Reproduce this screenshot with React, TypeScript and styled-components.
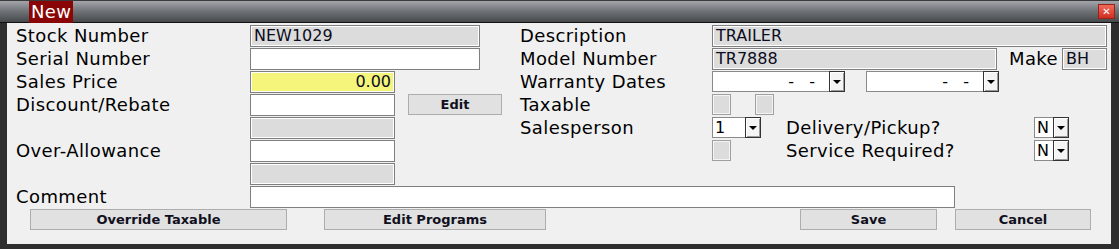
import React from "react";
import styled, { createGlobalStyle } from "styled-components";

const GlobalStyle = createGlobalStyle`
  html, body {
    margin: 0;
    padding: 0;
    background: #2e2e2e;
  }
  * {
    box-sizing: border-box;
  }
`;

export default function App() {
  return (
    <>
      <GlobalStyle />
      <Window>
        <TitleBar>
          <TitleBadge>New</TitleBadge>
          <CloseButton>✕</CloseButton>
        </TitleBar>
        <Panel>
          <Form>
            {/* row 1 */}
            <Label row={1}>Stock Number</Label>
            <Cell row={1} col={2}>
              <Field w={230} tone="gray">NEW1029</Field>
            </Cell>
            <Label row={1} col={3}>Description</Label>
            <Cell row={1} col={4}>
              <Field w={395} tone="gray">TRAILER</Field>
            </Cell>

            {/* row 2 */}
            <Label row={2}>Serial Number</Label>
            <Cell row={2} col={2}>
              <Field w={230} tone="white" />
            </Cell>
            <Label row={2} col={3}>Model Number</Label>
            <Cell row={2} col={4}>
              <Field w={285} tone="gray">TR7888</Field>
              <InlineLabel gap={12}>Make</InlineLabel>
              <Field w={45} tone="gray" gap={4}>BH</Field>
            </Cell>

            {/* row 3 */}
            <Label row={3}>Sales Price</Label>
            <Cell row={3} col={2}>
              <Field w={145} tone="yellow" right>
                0.00
              </Field>
            </Cell>
            <Label row={3} col={3}>Warranty Dates</Label>
            <Cell row={3} col={4}>
              <Dropdown w={117} date>
                {"-   -"}
              </Dropdown>
              <Dropdown w={117} date gap={21}>
                {"-   -"}
              </Dropdown>
            </Cell>

            {/* row 4 */}
            <Label row={4}>Discount/Rebate</Label>
            <Cell row={4} col={2}>
              <Field w={145} tone="white" />
              <Button w={94} gap={13}>
                Edit
              </Button>
            </Cell>
            <Label row={4} col={3}>Taxable</Label>
            <Cell row={4} col={4}>
              <CheckBox />
              <CheckBox gap={24} />
            </Cell>

            {/* row 5 */}
            <Cell row={5} col={2}>
              <Field w={145} tone="gray" />
            </Cell>
            <Label row={5} col={3}>Salesperson</Label>
            <Cell row={5} col={4}>
              <Slot>
                <Dropdown w={33}>1</Dropdown>
              </Slot>
              <InlineLabel w={248}>Delivery/Pickup?</InlineLabel>
              <Dropdown w={19}>N</Dropdown>
            </Cell>

            {/* row 6 */}
            <Label row={6}>Over-Allowance</Label>
            <Cell row={6} col={2}>
              <Field w={145} tone="white" />
            </Cell>
            <Cell row={6} col={4}>
              <Slot>
                <CheckBox />
              </Slot>
              <InlineLabel w={248}>Service Required?</InlineLabel>
              <Dropdown w={19}>N</Dropdown>
            </Cell>

            {/* row 7 */}
            <Cell row={7} col={2}>
              <Field w={145} tone="gray" />
            </Cell>

            {/* row 8 */}
            <Label row={8}>Comment</Label>
            <Cell row={8} col={2} span={3}>
              <Field w={705} tone="white" />
            </Cell>
          </Form>

          <ButtonRow>
            <Button w={257}>Override Taxable</Button>
            <Button w={222} gap={37}>
              Edit Programs
            </Button>
            <Button w={137} gap={254}>
              Save
            </Button>
            <Button w={136} gap={18}>
              Cancel
            </Button>
          </ButtonRow>
        </Panel>
      </Window>
    </>
  );
}

const Dropdown = ({
  w,
  gap,
  date,
  children,
}: {
  w: number;
  gap?: number;
  date?: boolean;
  children?: React.ReactNode;
}) => {
  return (
    <SelectWrap gap={gap}>
      <SelectBox w={w} date={date}>
        {children}
      </SelectBox>
      <ArrowButton>
        <Arrow />
      </ArrowButton>
    </SelectWrap>
  );
};

const Window = styled.div`
  width: 1119px;
  height: 249px;
  background: #2e2e2e;
  display: flex;
  flex-direction: column;
  font-family: "DejaVu Sans", Verdana, sans-serif;
`;

const TitleBar = styled.div`
  height: 23px;
  display: flex;
  align-items: flex-start;
  padding-left: 29px;
  padding-right: 4px;
  background: linear-gradient(#a2a6aa 0%, #72767a 45%, #45494c 100%);
  border-top: 1px solid #3a3a3a;
  border-bottom: 1px solid #111;
`;

const TitleBadge = styled.div`
  height: 22px;
  padding: 0 2px;
  background: #8a0606;
  color: #fff;
  font-size: 18px;
  line-height: 22px;
  letter-spacing: 0.3px;
`;

const CloseButton = styled.div`
  margin-left: auto;
  margin-top: 3px;
  width: 17px;
  height: 15px;
  background: linear-gradient(#f06a5a, #cf2f22);
  border: 1px solid #9a2018;
  color: #fff;
  font-size: 10px;
  font-weight: bold;
  line-height: 13px;
  text-align: center;
`;

const Panel = styled.div`
  margin: 0 8px 5px 7px;
  flex: 1;
  background: #f0f0f0;
  display: flex;
  flex-direction: column;
`;

const Form = styled.div`
  display: grid;
  grid-template-columns: 234px 270px 192px 1fr;
  grid-template-rows: repeat(8, 23px);
  padding: 1px 0 0 9px;
`;

const Label = styled.div<{ row: number; col?: number }>`
  grid-row: ${(p) => p.row};
  grid-column: ${(p) => p.col || 1};
  font-size: 18px;
  line-height: 23px;
  letter-spacing: 0.4px;
  color: #000;
  white-space: nowrap;
`;

const Cell = styled.div<{ row: number; col: number; span?: number }>`
  grid-row: ${(p) => p.row};
  grid-column: ${(p) => p.col} / span ${(p) => p.span || 1};
  display: flex;
  align-items: center;
`;

const Slot = styled.div`
  width: 74px;
  display: flex;
  align-items: center;
`;

const InlineLabel = styled.div<{ gap?: number; w?: number }>`
  margin-left: ${(p) => p.gap || 0}px;
  width: ${(p) => (p.w ? p.w + "px" : "auto")};
  font-size: 18px;
  line-height: 23px;
  letter-spacing: 0.4px;
  color: #000;
  white-space: nowrap;
`;

const toneColors: Record<string, string> = {
  gray: "#dcdcdc",
  white: "#ffffff",
  yellow: "#f5f57c",
};

const Field = styled.div<{
  w: number;
  tone: string;
  right?: boolean;
  gap?: number;
}>`
  width: ${(p) => p.w}px;
  height: 22px;
  margin-left: ${(p) => p.gap || 0}px;
  background: ${(p) => toneColors[p.tone]};
  border: 1px solid #7f7f7f;
  box-shadow: ${(p) => (p.tone === "white" ? "none" : "inset 0 0 0 1px #fff")};
  padding: 0 3px;
  font-size: 16px;
  line-height: 20px;
  color: #0c0c20;
  text-align: ${(p) => (p.right ? "right" : "left")};
  white-space: nowrap;
  overflow: hidden;
`;

const SelectWrap = styled.div<{ gap?: number }>`
  display: flex;
  margin-left: ${(p) => p.gap || 0}px;
  height: 21px;
`;

const SelectBox = styled.div<{ w: number; date?: boolean }>`
  width: ${(p) => p.w}px;
  height: 21px;
  background: #fff;
  border: 1px solid #8a8a8a;
  border-right: none;
  padding: ${(p) => (p.date ? "0 14px 0 0" : "0 0 0 2px")};
  text-align: ${(p) => (p.date ? "right" : "left")};
  font-size: 16px;
  line-height: 19px;
  color: #000;
  white-space: pre;
`;

const ArrowButton = styled.div`
  width: 16px;
  height: 21px;
  background: #f4f4f4;
  border: 1px solid #333;
  box-shadow: inset 1px 1px 0 #fff, inset -1px -1px 0 #9a9a9a;
  display: flex;
  align-items: center;
  justify-content: center;
`;

const Arrow = styled.div`
  width: 0;
  height: 0;
  border-left: 4px solid transparent;
  border-right: 4px solid transparent;
  border-top: 4px solid #000;
`;

const CheckBox = styled.div<{ gap?: number }>`
  width: 19px;
  height: 21px;
  margin-left: ${(p) => p.gap || 0}px;
  background: #dcdcdc;
  border: 1px solid #a0a0a0;
  box-shadow: inset 0 0 0 1px #f4f4f4;
`;

const ButtonRow = styled.div`
  display: flex;
  padding: 1px 0 0 23px;
`;

const Button = styled.div<{ w: number; gap?: number }>`
  width: ${(p) => p.w}px;
  height: 21px;
  margin-left: ${(p) => p.gap || 0}px;
  background: #e1e1e1;
  border: 1px solid #adadad;
  font-size: 13px;
  font-weight: bold;
  line-height: 19px;
  text-align: center;
  color: #101020;
  white-space: nowrap;
`;
